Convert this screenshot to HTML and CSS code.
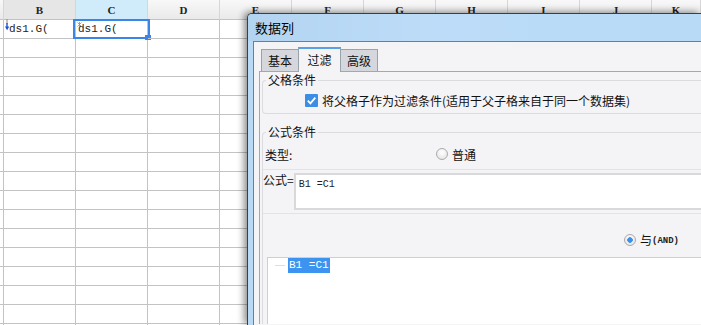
FILE: index.html
```html
<!DOCTYPE html>
<html lang="zh-CN">

<head>
	<meta charset="UTF-8">
	<title>数据列</title>
	<link rel="stylesheet" href="styles.css">
</head>

<body>
	<!-- 表格背景 -->
	<div class="sheet">
		<div class="sheet-head">
			<div class="col-a"></div>
			<div class="head-cell dim">B</div>
			<div class="head-cell current">C</div>
			<div class="head-cell">D</div>
			<div class="head-cell">E</div>
			<div class="head-cell">F</div>
			<div class="head-cell">G</div>
			<div class="head-cell">H</div>
			<div class="head-cell">I</div>
			<div class="head-cell">J</div>
			<div class="head-cell last">K</div>
		</div>
		<div class="sheet-row">
			<div class="col-a"></div>
			<div class="cell expand">
				<svg class="mark" width="5" height="12" viewBox="0 0 5 12">
					<path d="M2 0v5" stroke="#8a8a8a" stroke-width="1"/>
					<path d="M2 4v5" stroke="#1f4fd8" stroke-width="1.4"/>
					<path d="M0 7.5h4.2l-2.1 3.8z" fill="#1f4fd8"/>
				</svg>
				ds1.G(
			</div>
			<div class="cell active">
				<svg class="mark small" width="5" height="5" viewBox="0 0 5 5">
					<path d="M0.5 0.5l4 4M4.5 0.5l-4 4M2.5 0v5" stroke="#8a8a8a" stroke-width="0.8"/>
				</svg>
				ds1.G(
				<span class="sel-box"><span class="handle"></span></span>
			</div>
			<div class="cell"></div>
			<div class="cell"></div>
			<div class="cell"></div>
			<div class="cell"></div>
			<div class="cell"></div>
			<div class="cell"></div>
			<div class="cell"></div>
			<div class="cell last"></div>
		</div>
		<div class="sheet-rest"></div>
	</div>

	<!-- 数据列对话框 -->
	<div class="dialog">
		<div class="title-bar">数据列</div>
		<div class="frame">
			<div class="content">
				<div class="tabs">
					<div class="tab">基本</div>
					<div class="tab on">过滤</div>
					<div class="tab">高级</div>
				</div>
				<div class="panel">
					<fieldset class="group">
						<legend>父格条件</legend>
						<label class="check-row">
							<span class="checkbox">
								<svg width="13" height="13" viewBox="0 0 13 13">
									<path d="M2.8 6.6l2.6 2.7 4.9-5.6" fill="none" stroke="#fff" stroke-width="1.8"/>
								</svg>
							</span>
							将父格子作为过滤条件(适用于父子格来自于同一个数据集)
						</label>
					</fieldset>
					<fieldset class="group formula">
						<legend>公式条件</legend>
						<div class="type-row">
							<span class="type-label">类型:</span>
							<span class="radio"></span>
							<span>普通</span>
						</div>
						<div class="formula-row">
							<span class="formula-label">公式=</span>
							<div class="formula-field">B1 =C1</div>
						</div>
						<div class="join-row">
							<span class="radio checked"></span>
							<span>与</span><span class="mono">(AND)</span>
						</div>
						<div class="tree-box">
							<div class="tree-item">
								<span class="tree-line"></span>
								<span class="tree-text">B1 =C1</span>
							</div>
						</div>
					</fieldset>
				</div>
			</div>
		</div>
	</div>
</body>

</html>
```

FILE: styles.css
```css
/* 基础样式 */
body {
	margin: 0;
	width: 701px;
	height: 325px;
	overflow: hidden;
	position: relative;
	background: #fff;
	font-family: 'Noto Sans CJK SC', 'Noto Sans', sans-serif;
	font-size: 12px;
	color: #111;
}

/* 表格 */
.sheet {
	display: flex;
	flex-direction: column;
	height: 100%;
	overflow: hidden;
}

.sheet-head,
.sheet-row {
	display: flex;
}

.col-a {
	flex: 0 0 4px;
	box-sizing: border-box;
	border-right: 1px solid #c3c3c3;
}

.sheet-head {
	height: 20px;
	background: linear-gradient(#f8f8f8, #e9e9e9);
}

.sheet-head > div {
	box-sizing: border-box;
	border-bottom: 1px solid #c3c3c3;
}

.sheet-head .col-a {
	border-right-color: #d6d6d6;
}

.head-cell {
	flex: 0 0 72px;
	border-right: 1px solid #d6d6d6;
	text-align: center;
	font-family: 'Liberation Serif', serif;
	font-weight: bold;
	font-size: 11px;
	line-height: 20px;
	color: #222;
}

.head-cell.last,
.cell.last {
	flex: 1;
}

.head-cell.dim {
	background: #e6e6e6;
}

.head-cell.current {
	background: #d0ebf9;
}

.sheet-row {
	height: 19px;
}

.sheet-row > div {
	box-sizing: border-box;
	border-bottom: 1px solid #c3c3c3;
}

.cell {
	flex: 0 0 72px;
	position: relative;
	border-right: 1px solid #c3c3c3;
	padding-left: 2px;
	font-family: 'Liberation Mono', monospace;
	font-size: 11px;
	line-height: 18px;
	color: #222;
}

.cell.expand {
	padding-left: 5px;
}

.mark {
	position: absolute;
	left: 1px;
	top: -1px;
}

.mark.small {
	top: 2px;
}

.sel-box {
	position: absolute;
	left: -3px;
	top: -1px;
	width: 77px;
	height: 20px;
	box-sizing: border-box;
	border: 2px solid #3a86e8;
}

.handle {
	position: absolute;
	right: -3px;
	bottom: -3px;
	width: 6px;
	height: 5px;
	background: #3a86e8;
}

.sheet-rest {
	flex: 1;
	background:
		repeating-linear-gradient(to right, #c3c3c3 0 1px, transparent 1px 72px) 3px 0,
		repeating-linear-gradient(to bottom, transparent 0 18px, #c3c3c3 18px 19px);
}

/* 对话框 */
.dialog {
	position: absolute;
	left: 247px;
	top: 13px;
	right: 0;
	bottom: 0;
	overflow: hidden;
	border: 1px solid #3b3f44;
	border-right: none;
	border-bottom: none;
	border-radius: 5px 0 0 0;
	background: #b9daf6;
	box-shadow: -3px -1px 7px rgba(0, 0, 0, 0.45);
	display: flex;
	flex-direction: column;
}

.title-bar {
	flex: 0 0 27px;
	padding-left: 7px;
	line-height: 27px;
	font-size: 13px;
	color: #000;
	background: linear-gradient(to right, #b3d4f1, #bcdcf8 40%, #b8daf7);
}

.frame {
	flex: 1;
	padding-left: 5px;
	display: flex;
	min-height: 0;
}

.content {
	flex: 1;
	background: #f4f4f6;
	border-top: 1px solid #6f7d8c;
	border-left: 1px solid #6f7d8c;
	padding: 5px 0 0 5px;
	overflow: hidden;
}

/* 选项卡 */
.tabs {
	display: flex;
	align-items: flex-end;
	height: 24px;
	margin-left: 2px;
}

.tab {
	box-sizing: border-box;
	width: 38px;
	height: 22px;
	border: 1px solid #99a3ad;
	border-bottom: none;
	background: #d6d7dc;
	text-align: center;
	line-height: 21px;
}

.tab + .tab {
	margin-left: -1px;
}

.tab.on {
	position: relative;
	z-index: 1;
	width: 43px;
	height: 25px;
	margin-bottom: -1px;
	border-top: 2px solid #5aa0e6;
	background: #f4f4f6;
	line-height: 21px;
}

.panel {
	border-top: 1px solid #a0a9b3;
	border-left: 1px solid #a0a9b3;
}

/* 分组框 */
.group {
	margin: 0 0 0 2px;
	padding: 0;
	border: 1px solid #dcdce0;
	border-right: none;
	border-radius: 4px 0 0 4px;
}

.group legend {
	margin-left: 3px;
	padding: 0 2px;
	font-size: 12px;
	line-height: 16px;
}

.check-row {
	display: flex;
	align-items: center;
	height: 16px;
	margin-top: 4px;
	margin-bottom: 5px;
	padding-left: 42px;
	gap: 4px;
	white-space: nowrap;
}

.checkbox {
	width: 13px;
	height: 13px;
	background: #3b8de6;
	border-radius: 1px;
	display: flex;
}

.group.formula {
	margin-top: 10px;
	border-bottom: none;
	border-radius: 4px 0 0 0;
}

.type-row {
	display: flex;
	align-items: center;
	height: 20px;
	margin-top: 4px;
	padding-left: 2px;
}

.type-label {
	width: 171px;
}

.radio {
	box-sizing: border-box;
	width: 12px;
	height: 12px;
	margin-right: 4px;
	border: 1px solid #ababab;
	border-radius: 50%;
	background: radial-gradient(circle at 50% 35%, #fff, #e0e0e2);
}

.radio.checked {
	background:
		radial-gradient(circle, #3d8fe9 0 2.5px, transparent 3px),
		radial-gradient(circle at 50% 35%, #fff, #e0e0e2);
}

.formula-row {
	display: flex;
	margin-top: 5px;
	padding: 3px 0 3px;
	border-top: 1px solid #e3e3e6;
	border-bottom: 1px solid #e3e3e6;
}

.formula-label {
	line-height: 16px;
	margin-top: -1px;
}

.formula-field {
	flex: 1;
	box-sizing: border-box;
	height: 37px;
	border: 2px solid #d9d9dc;
	border-right: none;
	background: #fff;
	padding: 3px 3px 0;
	font-family: 'Liberation Mono', monospace;
	font-size: 10px;
	line-height: 14px;
	color: #222;
}

.join-row {
	display: flex;
	align-items: center;
	height: 16px;
	line-height: 16px;
	margin-top: 18px;
	padding-left: 361px;
}

.mono {
	font-family: 'Liberation Mono', monospace;
	font-size: 9px;
	font-weight: bold;
	color: #222;
	margin-top: 1px;
}

.tree-box {
	margin: 9px 0 0 4px;
	height: 66px;
	border: 1px solid #cfcfd3;
	border-right: none;
	border-bottom: none;
	background: #fff;
}

.tree-item {
	display: flex;
	align-items: center;
	padding-left: 7px;
}

.tree-line {
	width: 10px;
	height: 1px;
	margin-right: 3px;
	background: #dddddd;
}

.tree-text {
	height: 15px;
	padding: 0 1px;
	background: #3c94f0;
	color: #fff;
	font-family: 'Liberation Mono', monospace;
	font-size: 11px;
	line-height: 15px;
}
```
